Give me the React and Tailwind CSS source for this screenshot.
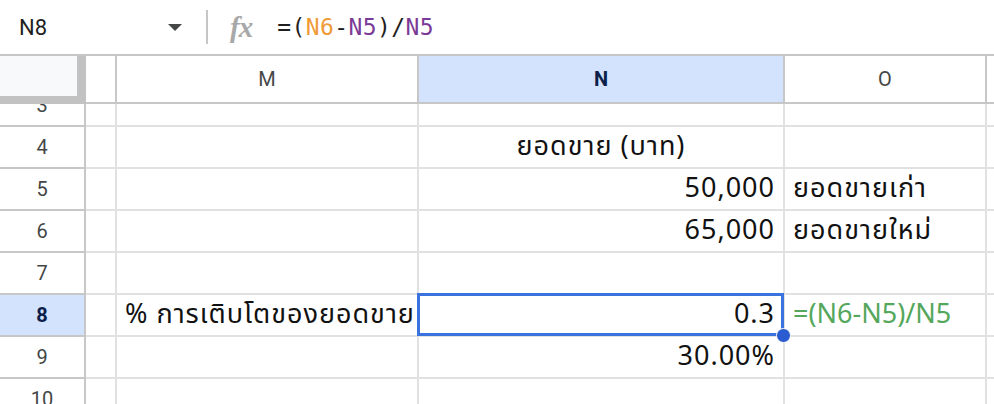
import React from 'react';

const gridFont = "font-['Noto_Sans_Thai','Noto_Sans','Loma','Garuda',sans-serif]";
const uiFont = "font-['Roboto','Liberation_Sans',sans-serif]";

const cols = [
  { key: 'blank', w: 'w-[31px]' },
  { key: 'M', w: 'w-[302px]' },
  { key: 'N', w: 'w-[366px]' },
  { key: 'O', w: 'w-[202px]' },
  { key: 'P', w: 'w-[200px]' },
];

const rows = [
  { n: 3 },
  { n: 4, N: { text: 'ยอดขาย (บาท)', align: 'center' } },
  { n: 5, N: { text: '50,000', align: 'right' }, O: { text: 'ยอดขายเก่า' } },
  { n: 6, N: { text: '65,000', align: 'right' }, O: { text: 'ยอดขายใหม่' } },
  { n: 7 },
  {
    n: 8,
    M: { text: '% การเติบโตของยอดขาย' },
    N: { text: '0.3', align: 'right' },
    O: { text: '=(N6-N5)/N5', green: true },
    active: true,
  },
  { n: 9, N: { text: '30.00%', align: 'right' } },
  { n: 10 },
];

const FormulaBar = () => (
  <div className={`flex items-center h-[56px] border-b-2 border-[#c4c7c5] ${uiFont}`}>
    <div className="w-[160px] pl-[19px] text-[22px] text-[#1f1f1f]">N8</div>
    <div className="w-0 h-0 ml-[8px] border-l-[7px] border-r-[7px] border-t-[7px] border-l-transparent border-r-transparent border-t-[#444746]" />
    <div className="ml-[24px] w-[2px] h-[34px] bg-[#c4c7c5]" />
    <div className="ml-[22px] text-[29px] italic font-bold text-[#a8a8a8] font-['Liberation_Serif',serif] tracking-[-1px] leading-none">fx</div>
    <div className="ml-[25px] text-[23px] font-['DejaVu_Sans_Mono',monospace] tracking-[0.4px] text-[#1f1f1f]">
      =(<span className="text-[#f09a37]">N6</span>-<span className="text-[#7b3a96]">N5</span>)/<span className="text-[#7b3a96]">N5</span>
    </div>
  </div>
);

const HeaderRow = () => (
  <div className={`flex h-[48px] ${uiFont}`}>
    <div className="w-[86px] shrink-0 bg-[#f8f9fa] border-r-[9px] border-b-[8px] border-[#c2c2c2]" />
    {cols.map((c) => (
      <div
        key={c.key}
        className={`${c.w} shrink-0 flex items-center justify-center border-r-2 border-b-2 border-[#c7c7c7] text-[20px] ${
          c.key === 'N' ? 'bg-[#d3e3fd] text-[#0b1f4a] font-bold' : 'bg-white text-[#444746]'
        }`}
      >
        {c.key === 'blank' || c.key === 'P' ? '' : c.key}
      </div>
    ))}
  </div>
);

const Cell = ({ w, data, children }) => (
  <div className={`${w} shrink-0 relative h-full border-r-2 border-b-2 border-[#e1e1e1]`}>
    {data && (
      <div
        className={`absolute inset-y-0 left-[8px] right-[8px] flex items-center whitespace-nowrap text-[27px] ${
          data.align === 'right' ? 'justify-end' : data.align === 'center' ? 'justify-center' : 'justify-start'
        } ${data.green ? 'text-[#55a75c] tracking-[0px]' : 'text-[#111] tracking-[1px]'}`}
      >
        {data.text}
      </div>
    )}
    {children}
  </div>
);

const Row = ({ row }) => (
  <div className="flex h-[42px]">
    <div
      className={`w-[86px] shrink-0 flex items-center justify-center border-r-[2px] border-b-2 border-[#c7c7c7] text-[20px] ${uiFont} ${
        row.active ? 'bg-[#d3e3fd] text-[#0b1f4a] font-bold' : 'bg-white text-[#444746]'
      }`}
    >
      {row.n}
    </div>
    <div className={`flex ${gridFont}`}>
      <Cell w="w-[31px]" />
      <Cell w="w-[302px]" data={row.M} />
      <Cell w="w-[366px]" data={row.N}>
        {row.active && (
          <>
            <div className="absolute -left-[2px] -top-[2px] -right-[1px] -bottom-[1px] border-[3px] border-[#3a73de] pointer-events-none" />
            <div className="absolute -right-[8px] -bottom-[8px] w-[15px] h-[15px] rounded-full bg-[#2b5bd0] border-[1.5px] border-white z-10" />
          </>
        )}
      </Cell>
      <Cell w="w-[202px]" data={row.O} />
      <Cell w="w-[200px]" />
    </div>
  </div>
);

export default function App() {
  return (
    <div className="w-[994px] h-[404px] overflow-hidden bg-white flex flex-col">
      <FormulaBar />
      <HeaderRow />
      <div className="flex-1 overflow-hidden">
        <div className="-mt-[19px]">
          {rows.map((r) => (
            <Row key={r.n} row={r} />
          ))}
        </div>
      </div>
    </div>
  );
}
